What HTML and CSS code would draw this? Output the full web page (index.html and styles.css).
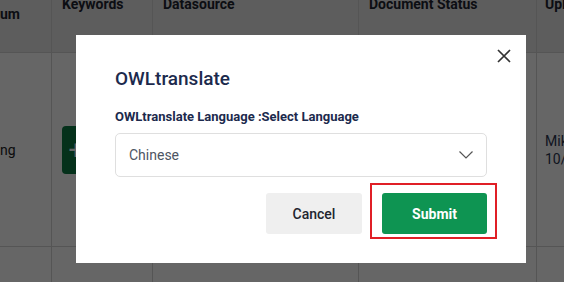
FILE: index.html
```html
<!DOCTYPE html>
<html lang="en">
<head>
  <meta charset="UTF-8" />
  <meta name="viewport" content="width=device-width, initial-scale=1" />
  <title>OWLtranslate</title>
  <link rel="stylesheet" href="styles.css">
</head>
<body>
  <div class="table">
    <div class="row head">
      <div class="cell c1"><span class="wrap">um</span></div>
      <div class="cell c2">Keywords</div>
      <div class="cell c3">Datasource</div>
      <div class="cell c4">Document Status</div>
      <div class="cell c5">Upl</div>
    </div>
    <div class="row body">
      <div class="cell c1 mid">ng</div>
      <div class="cell c2 mid"><span class="add">+</span></div>
      <div class="cell c3"></div>
      <div class="cell c4"></div>
      <div class="cell c5 mid">Mik<br>10/</div>
    </div>
    <div class="row body last">
      <div class="cell c1"></div>
      <div class="cell c2"></div>
      <div class="cell c3"></div>
      <div class="cell c4"></div>
      <div class="cell c5"></div>
    </div>
  </div>

  <div class="overlay"></div>

  <div class="modal">
    <button class="close" aria-label="Close">
      <svg width="14" height="14" viewBox="0 0 14 14"><path d="M1 1L13 13M13 1L1 13" stroke="#333" stroke-width="1.7" fill="none"/></svg>
    </button>
    <h2 class="modal-title">OWLtranslate</h2>
    <label class="field-label">OWLtranslate Language :Select Language</label>
    <div class="select">
      <span>Chinese</span>
      <svg width="14" height="8" viewBox="0 0 14 8"><path d="M0.5 0.5L7 7L13.5 0.5" stroke="#555" stroke-width="1.2" fill="none"/></svg>
    </div>
    <div class="actions">
      <button class="btn cancel">Cancel</button>
      <div class="highlight">
        <button class="btn submit">Submit</button>
      </div>
    </div>
  </div>
</body>
</html>
```

FILE: styles.css
```css
body {
  margin: 0;
  font-family: Roboto, "Noto Sans", sans-serif;
  background: #fff;
  width: 564px;
  height: 282px;
  overflow: hidden;
  position: relative;
}
.table {
  margin-top: -14px;
}
.row {
  display: grid;
  grid-template-columns: 52px 101px 206px 178px 40px;
  border-bottom: 1px solid #d4d4d4;
}
.head {
  height: 66px;
  background: #e8e8e8;
  font-weight: 700;
  font-size: 14px;
  color: #1e2530;
}
.body {
  height: 193px;
}
.cell {
  border-right: 1px solid #d4d4d4;
  padding: 8px 0 0 10px;
  line-height: 20px;
}
.c1 {
  padding-left: 0;
}
.c5 {
  border-right: none;
  padding-left: 8px;
}
.wrap {
  display: block;
  padding-top: 10px;
}
.mid {
  display: flex;
  align-items: center;
  padding-top: 0;
  font-size: 14px;
  color: #222;
}
.body .c5 {
  flex-direction: column;
  align-items: flex-start;
  justify-content: center;
  line-height: 18px;
  color: #2a3550;
}
.add {
  display: flex;
  align-items: center;
  justify-content: center;
  width: 28px;
  height: 48px;
  background: #0e7a44;
  color: #fff;
  font-size: 26px;
  border-radius: 4px;
}
.overlay {
  position: absolute;
  inset: 0;
  background: rgba(0, 0, 0, 0.6);
}
.modal {
  position: absolute;
  left: 76px;
  top: 35px;
  width: 450px;
  height: 228px;
  background: #fff;
  box-sizing: border-box;
  padding: 31px 39px 0 39px;
}
.close {
  position: absolute;
  right: 15px;
  top: 14px;
  border: none;
  background: none;
  padding: 0;
  width: 14px;
  height: 14px;
  cursor: pointer;
}
.close svg {
  display: block;
}
.modal-title {
  margin: 0;
  font-size: 19px;
  font-weight: 500;
  color: #1c2a4d;
  line-height: 26px;
}
.field-label {
  display: block;
  margin-top: 16px;
  font-size: 13px;
  font-weight: 700;
  color: #1c2a4d;
  line-height: 18px;
}
.select {
  margin-top: 7px;
  height: 44px;
  border: 1px solid #dfdfdf;
  border-radius: 5px;
  box-sizing: border-box;
  display: flex;
  align-items: center;
  justify-content: space-between;
  padding: 0 13px 0 13px;
  font-size: 14px;
  color: #4d5563;
}
.actions {
  display: flex;
  justify-content: flex-end;
  gap: 20px;
  margin-top: 16px;
}
.btn {
  height: 41px;
  border: none;
  border-radius: 3px;
  font-family: inherit;
  font-size: 14px;
  cursor: pointer;
}
.cancel {
  width: 96px;
  background: #efefef;
  color: #1e2530;
  font-weight: 500;
}
.submit {
  width: 105px;
  background: #0e9452;
  color: #fff;
  font-weight: 700;
}
.highlight {
  position: relative;
}
.highlight::after {
  content: "";
  position: absolute;
  left: -12px;
  top: -10px;
  right: -10px;
  bottom: -5px;
  border: 2px solid #e01f26;
}
```
